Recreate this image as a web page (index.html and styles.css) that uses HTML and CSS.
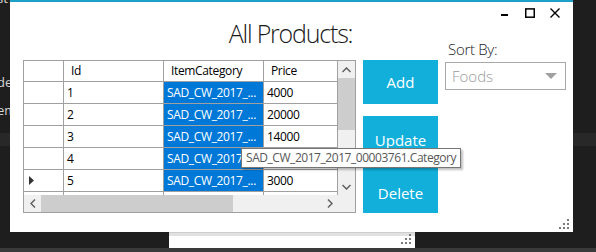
FILE: index.html
```html
<!DOCTYPE html>
<html lang="en">
<head>
  <meta charset="UTF-8" />
  <meta name="viewport" content="width=device-width, initial-scale=1.0"/>
  <title>All Products</title>
  <link rel="stylesheet" href="styles.css">
</head>
<body>

  <div class="desktop">
    <div class="editor-band"></div>
    <span class="frag frag-top">st</span>
    <span class="frag frag-de">de</span>
    <span class="frag frag-em">em</span>

    <div class="back-window">
      <div class="back-strip"></div>
      <svg class="grip" width="10" height="10" viewBox="0 0 10 10">
        <rect x="8" y="0" width="2" height="2"/>
        <rect x="4" y="4" width="2" height="2"/><rect x="8" y="4" width="2" height="2"/>
        <rect x="0" y="8" width="2" height="2"/><rect x="4" y="8" width="2" height="2"/><rect x="8" y="8" width="2" height="2"/>
      </svg>
    </div>

    <div class="window">
      <div class="titlebar">
        <span class="ctl">
          <svg width="10" height="10" viewBox="0 0 10 10"><rect x="1" y="6" width="7" height="2" fill="#000"/></svg>
        </span>
        <span class="ctl">
          <svg width="10" height="10" viewBox="0 0 10 10"><rect x="0.75" y="0.9" width="8.5" height="8.3" fill="none" stroke="#000" stroke-width="1.5"/></svg>
        </span>
        <span class="ctl">
          <svg width="10" height="10" viewBox="0 0 10 10"><path d="M0.5 0.5 L9.5 9.5 M9.5 0.5 L0.5 9.5" stroke="#000" stroke-width="1.4"/></svg>
        </span>
      </div>

      <div class="layout">
        <h1 class="title">All Products:</h1>
        <label class="sort-label">Sort By:</label>

        <div class="dgv">
          <div class="cells">
            <div class="row head">
              <div class="c rh"></div><div class="c">Id</div><div class="c">ItemCategory</div><div class="c">Price</div>
            </div>
            <div class="row">
              <div class="c rh"></div><div class="c">1</div><div class="c sel">SAD_CW_2017_...</div><div class="c">4000</div>
            </div>
            <div class="row">
              <div class="c rh"></div><div class="c">2</div><div class="c sel">SAD_CW_2017_...</div><div class="c">20000</div>
            </div>
            <div class="row">
              <div class="c rh"></div><div class="c">3</div><div class="c sel">SAD_CW_2017_...</div><div class="c">14000</div>
            </div>
            <div class="row">
              <div class="c rh"></div><div class="c">4</div><div class="c sel">SAD_CW_2017_...</div><div class="c"></div>
            </div>
            <div class="row">
              <div class="c rh">
                <svg class="current" width="5" height="9" viewBox="0 0 5 9"><polygon points="0,0 5,4.5 0,9" fill="#333"/></svg>
              </div>
              <div class="c">5</div><div class="c sel">SAD_CW_2017_...</div><div class="c">3000</div>
            </div>
            <div class="row">
              <div class="c rh"></div><div class="c"></div><div class="c"></div><div class="c"></div>
            </div>
          </div>

          <div class="vscroll">
            <span class="sb-btn">
              <svg width="9" height="6" viewBox="0 0 9 6"><polyline points="0.5,5 4.5,1 8.5,5" fill="none" stroke="#606060" stroke-width="1.5"/></svg>
            </span>
            <span class="thumb-v"></span>
            <span class="sb-track"></span>
            <span class="sb-btn">
              <svg width="9" height="6" viewBox="0 0 9 6"><polyline points="0.5,1 4.5,5 8.5,1" fill="none" stroke="#606060" stroke-width="1.5"/></svg>
            </span>
          </div>

          <div class="hscroll">
            <span class="sb-btn">
              <svg width="6" height="9" viewBox="0 0 6 9"><polyline points="5,0.5 1,4.5 5,8.5" fill="none" stroke="#606060" stroke-width="1.5"/></svg>
            </span>
            <span class="thumb-h"></span>
            <span class="sb-track"></span>
            <span class="sb-btn">
              <svg width="6" height="9" viewBox="0 0 6 9"><polyline points="1,0.5 5,4.5 1,8.5" fill="none" stroke="#606060" stroke-width="1.5"/></svg>
            </span>
          </div>

          <div class="corner"></div>
        </div>

        <div class="buttons">
          <button class="btn btn-add">Add</button>
          <button class="btn btn-update">Update</button>
          <button class="btn btn-delete">Delete</button>
        </div>

        <div class="sort">
          <div class="combo">
            <span>Foods</span>
            <svg width="12" height="6" viewBox="0 0 12 6"><polygon points="0,0 12,0 6,6" fill="#a0a0a0"/></svg>
          </div>
        </div>
      </div>

      <div class="tooltip">SAD_CW_2017_2017_00003761.Category</div>

      <svg class="grip" width="10" height="10" viewBox="0 0 10 10">
        <rect x="8" y="0" width="2" height="2"/>
        <rect x="4" y="4" width="2" height="2"/><rect x="8" y="4" width="2" height="2"/>
        <rect x="0" y="8" width="2" height="2"/><rect x="4" y="8" width="2" height="2"/><rect x="8" y="8" width="2" height="2"/>
      </svg>
    </div>

    <div class="taskbar"></div>
  </div>

</body>
</html>
```

FILE: styles.css
```css
body {
  margin: 0;
  background: #1e1e1e;
  font-family: "Open Sans", Arial, sans-serif;
  overflow: hidden;
}

.desktop {
  position: relative;
  width: 596px;
  height: 252px;
  overflow: hidden;
}

/* editor behind the form */
.editor-band {
  position: absolute;
  left: 0;
  right: 0;
  top: 133px;
  height: 13px;
  background: #282828;
}

.frag {
  position: absolute;
  left: -3px;
  color: #d4d4d4;
  font-size: 13px;
  line-height: 14px;
}

.frag-top { top: -9px; }
.frag-de { top: 75px; }
.frag-em { top: 103px; }

.back-window {
  position: absolute;
  left: 169px;
  top: 232px;
  width: 246px;
  height: 16px;
  background: #fff;
}

.back-strip {
  height: 3px;
  background: #e1e1e1;
  border-top: 1px solid #cdcdcd;
}

.grip {
  position: absolute;
  right: 4px;
  bottom: 3px;
  fill: #7a7a7a;
}

.back-window .grip {
  bottom: 4px;
}

.taskbar {
  position: absolute;
  left: 0;
  right: 0;
  bottom: 0;
  height: 4px;
  background: #3a3a3a;
}

/* main form */
.window {
  position: absolute;
  left: 10px;
  top: 0;
  width: 563px;
  height: 232px;
  box-sizing: border-box;
  background: #fff;
  border-top: 2px solid #1ba1c8;
}

.titlebar {
  height: 18px;
  display: flex;
  justify-content: flex-end;
  padding-right: 6px;
}

.ctl {
  width: 25px;
  display: flex;
  justify-content: center;
  padding-top: 6px;
}

.layout {
  display: grid;
  grid-template-columns: 333px 75px 121px;
  grid-template-rows: 40px 153px;
  column-gap: 7px;
  padding-left: 13px;
}

.title {
  grid-column: 1 / -1;
  grid-row: 1;
  align-self: end;
  margin: 0 0 10px 0;
  padding-right: 8px;
  text-align: center;
  font-size: 25px;
  font-weight: 300;
  line-height: 34px;
  letter-spacing: -1.2px;
  color: #1a1a1a;
}

.sort-label {
  grid-column: 3;
  grid-row: 1;
  align-self: end;
  margin-bottom: 1px;
  padding-left: 3px;
  font-size: 15px;
  font-weight: 300;
  line-height: 20px;
  letter-spacing: -0.3px;
  color: #222;
}

/* data grid */
.dgv {
  grid-column: 1;
  grid-row: 2;
  display: grid;
  grid-template-columns: 1fr 17px;
  grid-template-rows: 1fr 17px;
  border: 1px solid #a0a0a0;
  box-sizing: border-box;
  height: 153px;
}

.cells {
  overflow: hidden;
}

.row {
  display: grid;
  grid-template-columns: 40px 100px 100px 74px;
  height: 22px;
}

.row.head {
  height: 21px;
}

.c {
  box-sizing: border-box;
  border-right: 1px solid #a0a0a0;
  border-bottom: 1px solid #a0a0a0;
  padding-left: 3px;
  font-size: 12px;
  line-height: 21px;
  letter-spacing: -0.35px;
  color: #000;
  white-space: nowrap;
  overflow: hidden;
}

.head .c {
  padding-left: 7px;
  line-height: 20px;
}

.c.rh {
  display: flex;
  align-items: center;
  padding-left: 5px;
}

.c.sel {
  background: #0078d7;
  color: #fff;
}

.vscroll, .hscroll {
  display: flex;
  background: #f0f0f0;
}

.vscroll {
  flex-direction: column;
}

.sb-btn {
  width: 17px;
  height: 17px;
  flex: none;
  display: flex;
  align-items: center;
  justify-content: center;
}

.sb-track {
  flex: 1;
}

.thumb-v {
  height: 52px;
  background: #cdcdcd;
}

.thumb-h {
  width: 192px;
  background: #cdcdcd;
}

.corner {
  background: #f0f0f0;
}

/* buttons */
.buttons {
  grid-column: 2;
  grid-row: 2;
  display: flex;
  flex-direction: column;
}

.btn {
  border: none;
  margin: 0;
  padding: 0;
  background: #12afdb;
  color: #fff;
  font-family: "Open Sans", Arial, sans-serif;
  font-size: 15px;
  box-sizing: border-box;
}

.btn-add {
  height: 44px;
  margin-bottom: 12px;
}

.btn-update {
  height: 48px;
}

.btn-delete {
  height: 49px;
  padding-top: 8px;
}

/* sort combo */
.sort {
  grid-column: 3;
  grid-row: 2;
}

.combo {
  margin-top: 2px;
  height: 28px;
  box-sizing: border-box;
  border: 1px solid #a8a8a8;
  display: flex;
  align-items: center;
  justify-content: space-between;
  padding: 0 8px 0 6px;
  font-size: 15px;
  font-weight: 300;
  color: #9a9a9a;
}

.tooltip {
  position: absolute;
  left: 231px;
  top: 146px;
  width: 220px;
  height: 20px;
  box-sizing: border-box;
  border: 1px solid #767676;
  background: #fff;
  color: #575757;
  font-size: 12px;
  line-height: 18px;
  letter-spacing: -0.45px;
  padding-left: 4px;
  white-space: nowrap;
  box-shadow: 2px 2px 2px rgba(0,0,0,0.25);
}
```
